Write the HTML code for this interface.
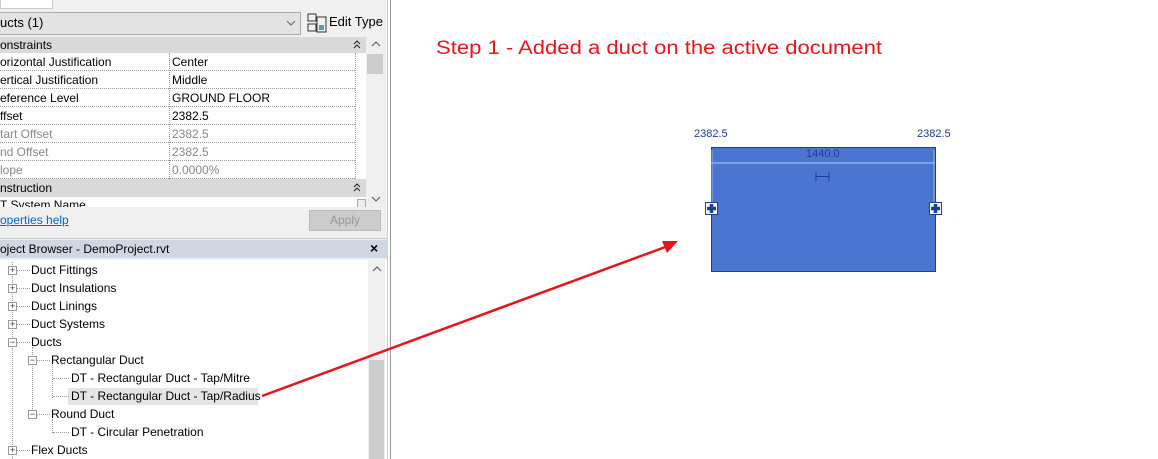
<!DOCTYPE html>
<html><head><meta charset="utf-8"><style>
*{margin:0;padding:0;box-sizing:border-box}
body{width:1158px;height:459px;overflow:hidden;background:#fff;font-family:"Liberation Sans",sans-serif;font-size:12px;color:#000;position:relative}
.a{position:absolute;white-space:nowrap}
.row{position:absolute;left:0;width:355px;height:18px;border-bottom:1px dotted #999;background:#fff}
.row span{position:absolute;top:2px}
.g{color:#888}
.box{position:absolute;width:9px;height:9px;border:1px solid #999;background:#fff;font-size:9px;line-height:7px;text-align:center;color:#333}
</style></head><body>
<div class="a" style="left:0;top:0;width:390px;height:459px;background:#f0f0f0;border-right:1px solid #a0a0a0"></div>
<div class="a" style="left:387px;top:0;width:4px;height:459px;background:#fff;border-left:1px solid #d0d0d0;border-right:1px solid #999"></div>
<div class="a" style="left:0;top:0;width:53px;height:9px;background:#fff;border:1px solid #ccc;border-top:none"></div>
<div class="a" style="left:0;top:12px;width:301px;height:23px;background:#e3e3e3;border:1px solid #aaa;border-left:none"></div>
<div class="a" style="left:0;top:15px;font-size:13px">ucts (1)</div>
<svg class="a" style="left:286px;top:19px" width="10" height="8"><path d="M1 2l4 4 4-4" stroke="#666" fill="none"/></svg>
<svg class="a" style="left:307px;top:13px" width="20" height="20"><rect x="1" y="1" width="8" height="7" fill="none" stroke="#333"/><rect x="1" y="11" width="8" height="7" fill="none" stroke="#333"/><rect x="10" y="4" width="9" height="15" fill="none" stroke="#333"/><rect x="12" y="12" width="5" height="5" fill="#59c"/></svg>
<div class="a" style="left:329px;top:14px;font-size:13px">Edit Type</div>
<div class="a" style="left:0;top:37px;width:366px;height:17px;background:#d9d9d9"></div>
<div class="a" style="left:0;top:38px;font-size:12px">onstraints</div>
<svg class="a" style="left:353px;top:40px" width="8" height="10"><path d="M1 4l3-3 3 3M1 8l3-3 3 3" stroke="#222" fill="none"/></svg>
<div class="row" style="top:53px"><span style="left:0">orizontal Justification</span><span style="left:172px">Center</span></div>
<div class="row" style="top:71px"><span style="left:0">ertical Justification</span><span style="left:172px">Middle</span></div>
<div class="row" style="top:89px"><span style="left:0">eference Level</span><span style="left:172px">GROUND FLOOR</span></div>
<div class="row" style="top:107px"><span style="left:0">ffset</span><span style="left:172px">2382.5</span></div>
<div class="row g" style="top:125px"><span style="left:0">tart Offset</span><span style="left:172px">2382.5</span></div>
<div class="row g" style="top:143px"><span style="left:0">nd Offset</span><span style="left:172px">2382.5</span></div>
<div class="row g" style="top:161px"><span style="left:0">lope</span><span style="left:172px">0.0000%</span></div>
<div class="a" style="left:169px;top:53px;height:126px;border-left:1px dotted #999"></div>
<div class="a" style="left:355px;top:53px;width:11px;height:126px;background:#fff;border-left:1px dotted #999"></div>
<div class="a" style="left:0;top:179px;width:366px;height:18px;background:#d9d9d9"></div>
<div class="a" style="left:0;top:181px">nstruction</div>
<svg class="a" style="left:353px;top:183px" width="8" height="10"><path d="M1 4l3-3 3 3M1 8l3-3 3 3" stroke="#222" fill="none"/></svg>
<div class="a" style="left:0;top:197px;width:366px;height:10px;background:#fff;overflow:hidden"><span style="position:absolute;top:1px;left:0">T System Name</span><span style="position:absolute;left:357px;top:2px;width:9px;height:9px;border:1px solid #aaa;background:#eee"></span></div>
<div class="a" style="left:366px;top:37px;width:18px;height:170px;background:#f0f0f0"></div>
<div class="a" style="left:367px;top:54px;width:16px;height:20px;background:#cdcdcd"></div>
<svg class="a" style="left:371px;top:41px" width="10" height="7"><path d="M1 5l4-4 4 4" stroke="#555" fill="none"/></svg>
<svg class="a" style="left:371px;top:196px" width="10" height="7"><path d="M1 1l4 4 4-4" stroke="#555" fill="none"/></svg>
<div class="a" style="left:0;top:213px;color:#0066cc;text-decoration:underline">operties help</div>
<div class="a" style="left:309px;top:210px;width:72px;height:21px;background:#ccc;border:1px solid #bbb;color:#999;text-align:center;line-height:19px">Apply</div>
<div class="a" style="left:0;top:238px;width:387px;height:1px;background:#bcc"></div>
<div class="a" style="left:0;top:240px;width:387px;height:18px;background:#cfd8e2"></div>
<div class="a" style="left:0;top:242px">oject Browser - DemoProject.rvt</div>
<div class="a" style="left:370px;top:240px;font-size:14px;font-weight:bold">&#215;</div>
<div class="a" style="left:0;top:260px;width:387px;height:199px;background:#fff"></div>
<div class="a" style="left:368px;top:260px;width:17px;height:199px;background:#f0f0f0"></div>
<div class="a" style="left:369px;top:360px;width:15px;height:99px;background:#cdcdcd"></div>
<svg class="a" style="left:372px;top:266px" width="10" height="7"><path d="M1 5l4-4 4 4" stroke="#555" fill="none"/></svg>
<div class="a" style="left:12px;top:262px;height:197px;border-left:1px dotted #999"></div>
<div class="a" style="left:32px;top:347px;height:70px;border-left:1px dotted #999"></div>
<div class="a" style="left:52px;top:365px;height:33px;border-left:1px dotted #999"></div>
<div class="a" style="left:52px;top:419px;height:14px;border-left:1px dotted #999"></div>
<div class="a" style="left:68px;top:388px;width:190px;height:17px;background:#e5e5e5"></div>
<div style="position:absolute;left:0;top:0">
<div class="box" style="left:8px;top:266px">+</div><div class="a" style="left:17px;top:270px;width:13px;border-top:1px dotted #999"></div><div class="a" style="left:31px;top:263px">Duct Fittings</div>
<div class="box" style="left:8px;top:284px">+</div><div class="a" style="left:17px;top:288px;width:13px;border-top:1px dotted #999"></div><div class="a" style="left:31px;top:281px">Duct Insulations</div>
<div class="box" style="left:8px;top:302px">+</div><div class="a" style="left:17px;top:306px;width:13px;border-top:1px dotted #999"></div><div class="a" style="left:31px;top:299px">Duct Linings</div>
<div class="box" style="left:8px;top:320px">+</div><div class="a" style="left:17px;top:324px;width:13px;border-top:1px dotted #999"></div><div class="a" style="left:31px;top:317px">Duct Systems</div>
<div class="box" style="left:8px;top:338px">&#8722;</div><div class="a" style="left:17px;top:342px;width:13px;border-top:1px dotted #999"></div><div class="a" style="left:31px;top:335px">Ducts</div>
<div class="box" style="left:28px;top:356px">&#8722;</div><div class="a" style="left:37px;top:360px;width:13px;border-top:1px dotted #999"></div><div class="a" style="left:51px;top:353px">Rectangular Duct</div>
<div class="a" style="left:53px;top:378px;width:16px;border-top:1px dotted #999"></div><div class="a" style="left:71px;top:371px">DT - Rectangular Duct - Tap/Mitre</div>
<div class="a" style="left:53px;top:396px;width:16px;border-top:1px dotted #999"></div><div class="a" style="left:71px;top:389px">DT - Rectangular Duct - Tap/Radius</div>
<div class="box" style="left:28px;top:410px">&#8722;</div><div class="a" style="left:37px;top:414px;width:13px;border-top:1px dotted #999"></div><div class="a" style="left:51px;top:407px">Round Duct</div>
<div class="a" style="left:53px;top:432px;width:16px;border-top:1px dotted #999"></div><div class="a" style="left:71px;top:425px">DT - Circular Penetration</div>
<div class="box" style="left:8px;top:446px">+</div><div class="a" style="left:17px;top:450px;width:13px;border-top:1px dotted #999"></div><div class="a" style="left:31px;top:443px">Flex Ducts</div>
</div>
<svg class="a" style="left:0;top:0" width="1158" height="459">
<text x="436" y="54" fill="#e8141c" font-family="Liberation Sans" font-size="19" textLength="446" lengthAdjust="spacingAndGlyphs">Step 1 - Added a duct on the active document</text>
<text x="694" y="137" fill="#1e3c8c" font-size="11" font-family="Liberation Sans">2382.5</text>
<text x="917" y="137" fill="#1e3c8c" font-size="11" font-family="Liberation Sans">2382.5</text>
<rect x="711.5" y="147.5" width="224" height="124" fill="#4b76d0" stroke="#1a3e9a"/>
<line x1="711" y1="163" x2="935" y2="163" stroke="#8fb0ee" stroke-width="1.5"/>
<line x1="712" y1="150" x2="712" y2="205" stroke="#8fb0ee"/>
<line x1="934" y1="150" x2="934" y2="205" stroke="#8fb0ee"/>
<text x="806" y="157" fill="#1e3c8c" font-size="11" font-family="Liberation Sans">1440.0</text>
<path d="M816 172v9M829 172v9M816 176.5h13" stroke="#1a3e9a" fill="none"/>
<rect x="705.5" y="202.5" width="12" height="12" fill="#fff" stroke="#1a3e9a"/><path d="M707 208.5h9M711.5 204v9" stroke="#1a3e9a" stroke-width="3.5"/>
<rect x="929.5" y="202.5" width="12" height="12" fill="#fff" stroke="#1a3e9a"/><path d="M931 208.5h9M935.5 204v9" stroke="#1a3e9a" stroke-width="3.5"/>
<line x1="262" y1="396" x2="668" y2="246" stroke="#e8141c" stroke-width="2.5"/>
<polygon points="678,241 662,241 667,253" fill="#e8141c"/>
</svg>
</body></html>
